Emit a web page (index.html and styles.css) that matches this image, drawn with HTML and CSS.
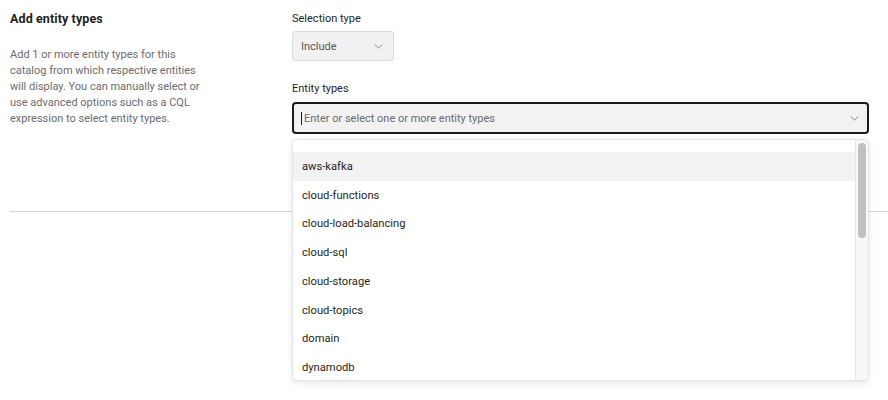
FILE: index.html
```html
<!DOCTYPE html>
<html lang="en">
<head>
<meta charset="utf-8">
<title>Add entity types</title>
<link rel="stylesheet" href="styles.css">
</head>
<body>
<div class="page">
  <section class="row">
    <div class="intro">
      <h2 class="intro-title">Add entity types</h2>
      <p class="intro-text">Add 1 or more entity types for this catalog from which respective entities will display. You can manually select or use advanced options such as a CQL expression to select entity types.</p>
    </div>
    <div class="fields">
      <div class="field-label">Selection type</div>
      <div class="select">
        <span class="select-value">Include</span>
        <svg class="chev" viewBox="0 0 10 6" width="9" height="5"><path d="M1 1l4 4 4-4" fill="none" stroke="#7a7c82" stroke-width="1.1" stroke-linecap="round" stroke-linejoin="round"/></svg>
      </div>
      <div class="field-label field-label-2">Entity types</div>
      <div class="combo">
        <div class="combo-input">
          <span class="caret"></span>
          <span class="placeholder">Enter or select one or more entity types</span>
          <svg class="chev" viewBox="0 0 10 6" width="9" height="5"><path d="M1 1l4 4 4-4" fill="none" stroke="#7a7c82" stroke-width="1.1" stroke-linecap="round" stroke-linejoin="round"/></svg>
        </div>
        <div class="menu">
          <ul class="menu-list">
            <li class="menu-item is-active">aws-kafka</li>
            <li class="menu-item">cloud-functions</li>
            <li class="menu-item">cloud-load-balancing</li>
            <li class="menu-item">cloud-sql</li>
            <li class="menu-item">cloud-storage</li>
            <li class="menu-item">cloud-topics</li>
            <li class="menu-item">domain</li>
            <li class="menu-item">dynamodb</li>
          </ul>
          <div class="scrolltrack"><div class="scrollthumb"></div></div>
        </div>
      </div>
    </div>
  </section>
  <div class="divider"></div>
</div>
</body>
</html>
```

FILE: styles.css
```css
* { box-sizing: border-box; }
html, body { margin: 0; padding: 0; background: #fff; }
body {
  font-family: Roboto, "Liberation Sans", sans-serif;
  color: #1f1f21;
  font-size: 11px;
}
.page {
  padding: 11px 0 0 10px;
  min-height: 400px;
}
.row {
  display: grid;
  grid-template-columns: 282px 577px;
  padding-bottom: 77px;
}
.intro-title {
  margin: 0;
  font-size: 12.5px;
  line-height: 16px;
  font-weight: 700;
  letter-spacing: 0.1px;
  color: #1f1f21;
}
.intro-text {
  margin: 20px 0 0;
  width: 194px;
  font-size: 11px;
  line-height: 16px;
  color: #6b6b70;
}
.fields {
  display: flex;
  flex-direction: column;
  align-items: flex-start;
}
.field-label {
  font-size: 11px;
  line-height: 16px;
  color: #1f1f21;
}
.field-label-2 { margin-top: 20px; }
.select {
  margin-top: 4px;
  width: 102px;
  height: 30px;
  background: #f1f1f1;
  border: 1px solid #dcdcdc;
  border-radius: 3px;
  display: flex;
  align-items: center;
  justify-content: space-between;
  padding: 0 10px 0 8px;
  color: #55565c;
}
.chev { display: block; }
.combo {
  position: relative;
  width: 577px;
  margin-top: 5px;
}
.combo-input {
  height: 32px;
  background: #f2f2f2;
  border: 2px solid #1b1b1d;
  border-radius: 4px;
  display: flex;
  align-items: center;
  padding: 0 8px 0 7px;
}
.caret {
  width: 1px;
  height: 13px;
  background: #1b1b1d;
  margin-right: 2px;
}
.placeholder {
  flex: 1;
  color: #6b6b70;
}
.menu {
  position: absolute;
  top: 37px;
  left: 0;
  width: 577px;
  height: 242px;
  background: #fff;
  border: 1px solid #e4e4e4;
  border-radius: 4px;
  box-shadow: 0 2px 6px rgba(0,0,0,0.10);
  display: flex;
  overflow: hidden;
}
.menu-list {
  list-style: none;
  margin: 0;
  padding: 12px 0 0;
  flex: 1;
}
.menu-item {
  height: 28.75px;
  display: flex;
  align-items: center;
  padding-left: 9px;
  font-size: 11.2px;
  color: #1f1f21;
}
.menu-item.is-active { background: #f2f2f2; }
.scrolltrack {
  width: 13px;
  background: #f8f8f8;
  border-left: 1px solid #e6e6e6;
  padding: 3px 2px 0 2px;
}
.scrollthumb {
  width: 8px;
  height: 95px;
  background: #c1c1c1;
  border-radius: 4px;
}
.divider {
  height: 1px;
  background: #d4d4d4;
}
```
